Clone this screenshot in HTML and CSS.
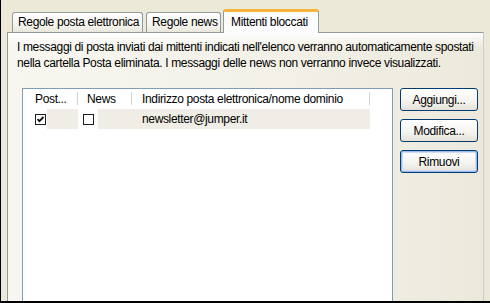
FILE: index.html
```html
<!DOCTYPE html>
<html lang="it">
<head>
  <meta charset="UTF-8" />
  <title>Mittenti bloccati</title>
  <link rel="stylesheet" href="styles.css">
</head>
<body>

  <!-- Tabs -->
  <div class="tabs">
    <div class="tab">Regole posta elettronica</div>
    <div class="tab">Regole news</div>
    <div class="tab active">Mittenti bloccati</div>
  </div>

  <!-- Panel -->
  <div class="panel">
    <p class="info">I messaggi di posta inviati dai mittenti indicati nell'elenco verranno automaticamente spostati<br>nella cartella Posta eliminata. I messaggi delle news non verranno invece visualizzati.</p>

    <div class="content">
      <div class="list">
        <div class="list-head">
          <div class="col c1">Post...</div>
          <div class="col c2">News</div>
          <div class="col c3">Indirizzo posta elettronica/nome dominio</div>
          <div class="col c4"></div>
        </div>
        <div class="list-row">
          <div class="cell c1">
            <span class="check">
              <svg width="11" height="11" viewBox="0 0 11 11"><rect x="0.5" y="0.5" width="10" height="10" fill="#fff" stroke="#1d1d1d"/><path d="M2.5 5.2 L4.4 7.2 L8.5 3" fill="none" stroke="#111" stroke-width="1.8"/></svg>
            </span>
            <span class="fill"></span>
          </div>
          <div class="cell c2">
            <span class="check">
              <svg width="11" height="11" viewBox="0 0 11 11"><rect x="0.5" y="0.5" width="10" height="10" fill="#fff" stroke="#1d1d1d"/></svg>
            </span>
            <span class="fill"></span>
          </div>
          <div class="cell c3 sel">newsletter@jumper.it</div>
          <div class="cell c4"></div>
        </div>
      </div>

      <div class="buttons">
        <button class="btn">Aggiungi...</button>
        <button class="btn">Modifica...</button>
        <button class="btn default">Rimuovi</button>
      </div>
    </div>
  </div>

</body>
</html>
```

FILE: styles.css
```css
* { margin: 0; padding: 0; box-sizing: border-box; }

html, body { height: 303px; overflow: hidden; }

body {
  font-family: "Liberation Sans", Arial, sans-serif;
  font-size: 12px;
  letter-spacing: -0.35px;
  color: #000;
  background: #ECE9D8;
  border-left: 1px solid #000;
  border-bottom: 2px solid #000;
  display: flex;
  flex-direction: column;
}

/* Tabs */
.tabs { display: flex; align-items: flex-end; padding: 9px 0 0 11px; gap: 3px; position: relative; z-index: 2; }
.tab {
  height: 20px;
  padding: 0 0 0 5px;
  line-height: 19px;
  white-space: nowrap;
  border: 1px solid #919B9C;
  border-bottom: none;
  border-radius: 3px 3px 0 0;
  background: linear-gradient(#FFFFFF, #F3F2EC 70%, #E8E6DC);
}
.tab:nth-child(1) { width: 131px; }
.tab:nth-child(2) { width: 75px; }
.tab.active {
  width: 96px;
  height: 24px;
  margin-left: -1px;
  margin-bottom: -1px;
  padding-left: 7px;
  line-height: 21px;
  background: #FCFCFE;
  border-top: 3px solid #F5B53A;
}

/* Panel */
.panel {
  flex: 1;
  margin-left: 6px;
  width: 477px;
  border: 1px solid #919B9C;
  border-bottom: none;
  border-right-color: #C9CDCD;
  background:
    linear-gradient(rgba(254,254,254,1) 0, rgba(254,254,254,0) 14px),
    linear-gradient(to right, #F7F6F0 0, #F2F0E7 60%, #ECE9DC 100%);
  display: flex;
  flex-direction: column;
}

.info { padding: 6px 0 0 9px; line-height: 16px; white-space: nowrap; }

.content { flex: 1; display: flex; margin-top: 17px; padding-left: 14px; gap: 7px; }

/* List */
.list {
  width: 371px;
  height: 230px;
  background: #fff;
  border: 1px solid #7F9DB9;
  border-bottom: none;
}
.list-head { display: grid; grid-template-columns: 55px 54px 238px 1fr; height: 20px; }
.list-head .col { position: relative; padding-top: 3px; line-height: 14px; white-space: nowrap; }
.list-head .col:not(.c4)::after {
  content: "";
  position: absolute;
  right: 0;
  top: 3px;
  height: 13px;
  border-right: 1px solid #D6D3CB;
}
.list-head .c1 { padding-left: 12px; }
.list-head .c2 { padding-left: 9px; }
.list-head .c3 { padding-left: 10px; }

.list-row { display: grid; grid-template-columns: 55px 54px 238px 1fr; height: 20px; }
.cell { display: flex; align-items: center; }
.cell.c1 { padding-left: 12px; }
.cell.c2 { padding-left: 5px; }
.check { display: block; width: 11px; height: 11px; }
.check svg { display: block; }
.cell .fill { flex: 1; align-self: stretch; background: #EFEDE5; }
.cell.c1 .fill { margin-left: 1px; }
.cell.c2 .fill { margin-left: 4px; }
.cell.sel { background: #EFEDE5; padding-left: 10px; white-space: nowrap; }

/* Buttons */
.buttons { display: flex; flex-direction: column; gap: 8px; }
.btn {
  width: 78px;
  height: 23px;
  font-family: inherit;
  font-size: 12px;
  letter-spacing: -0.35px;
  color: #000;
  border: 1px solid #003C74;
  border-radius: 3px;
  background: linear-gradient(#FFFFFF, #F4F3EE 60%, #E3E1D8);
}
.btn.default { box-shadow: inset 0 0 0 1px #9DB9EB, inset 0 0 0 2px #CEDCF5; }
```
